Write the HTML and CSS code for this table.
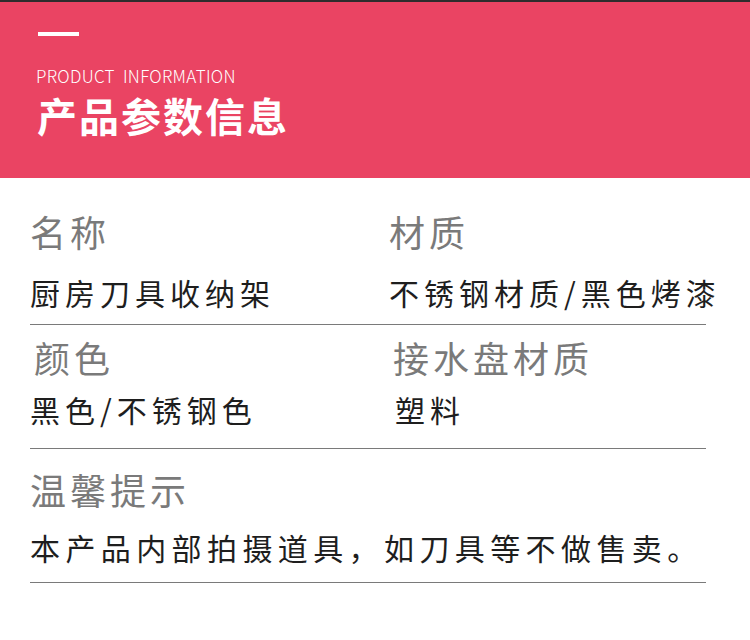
FILE: index.html
```html
<!DOCTYPE html>
<html lang="zh-CN">
<head>
<meta charset="utf-8">
<title>产品参数信息</title>
<link rel="stylesheet" href="styles.css">
</head>
<body>
<div class="strip"></div>
<header class="header">
  <div class="bar"></div>
  <div class="en">PRODUCT&nbsp; INFORMATION</div>
  <h1 class="title">产品参数信息</h1>
</header>
<main class="content">
  <section class="row row-1">
    <div class="cell">
      <div class="label">名称</div>
      <div class="value">厨房刀具收纳架</div>
    </div>
    <div class="cell">
      <div class="label">材质</div>
      <div class="value">不锈钢材质/黑色烤漆</div>
    </div>
  </section>
  <section class="row row-2">
    <div class="cell">
      <div class="label shift">颜色</div>
      <div class="value">黑色/不锈钢色</div>
    </div>
    <div class="cell">
      <div class="label shift">接水盘材质</div>
      <div class="value shift-more">塑料</div>
    </div>
  </section>
  <section class="row row-3 single">
    <div class="cell">
      <div class="label">温馨提示</div>
      <div class="value">本产品内部拍摄道具，如刀具等不做售卖。</div>
    </div>
  </section>
</main>
</body>
</html>
```
FILE: styles.css
```css
html, body {
  margin: 0;
  padding: 0;
  background: #ffffff;
}
body {
  width: 750px;
  height: 640px;
  overflow: hidden;
  font-family: "Noto Sans CJK SC", "Noto Sans", sans-serif;
}
.strip {
  height: 2px;
  background: #2e2c2d;
}
.header {
  height: 176px;
  background: #ea4463;
  padding-left: 38px;
  box-sizing: border-box;
  padding-top: 30px;
  color: #ffffff;
}
.bar {
  width: 41px;
  height: 4px;
  background: #ffffff;
}
.en {
  margin-top: 30px;
  font-family: "Noto Sans CJK SC", "Noto Sans", sans-serif;
  font-weight: 300;
  font-size: 17px;
  line-height: 20px;
  letter-spacing: 0.3px;
  margin-left: -2px;
}
.title {
  margin: 5px 0 0 -1px;
  font-family: "Noto Sans CJK SC", sans-serif;
  font-weight: 700;
  font-size: 40px;
  line-height: 48px;
  letter-spacing: 2px;
}
.content {
  padding: 0 44px 0 30px;
}
.row {
  display: grid;
  grid-template-columns: 359px 1fr;
  border-bottom: 1px solid #7a7a7a;
}
.row.single {
  grid-template-columns: 1fr;
}
.label {
  color: #7a7a7a;
  font-size: 36px;
  line-height: 44px;
  letter-spacing: 4px;
  white-space: nowrap;
}
.value {
  color: #1e1e1e;
  font-size: 30px;
  line-height: 40px;
  letter-spacing: 5px;
  white-space: nowrap;
}
.shift {
  padding-left: 4px;
}
.shift-more {
  padding-left: 6px;
}
.row-1 {
  padding-top: 31px;
  padding-bottom: 12px;
}
.row-1 .value {
  margin-top: 19px;
}
.row-2 {
  padding-top: 10px;
  padding-bottom: 19px;
}
.row-2 .value {
  margin-top: 10px;
}
.row-3 {
  padding-top: 18px;
  padding-bottom: 15px;
}
.row-3 .value {
  margin-top: 16px;
  letter-spacing: 5.4px;
}
```
